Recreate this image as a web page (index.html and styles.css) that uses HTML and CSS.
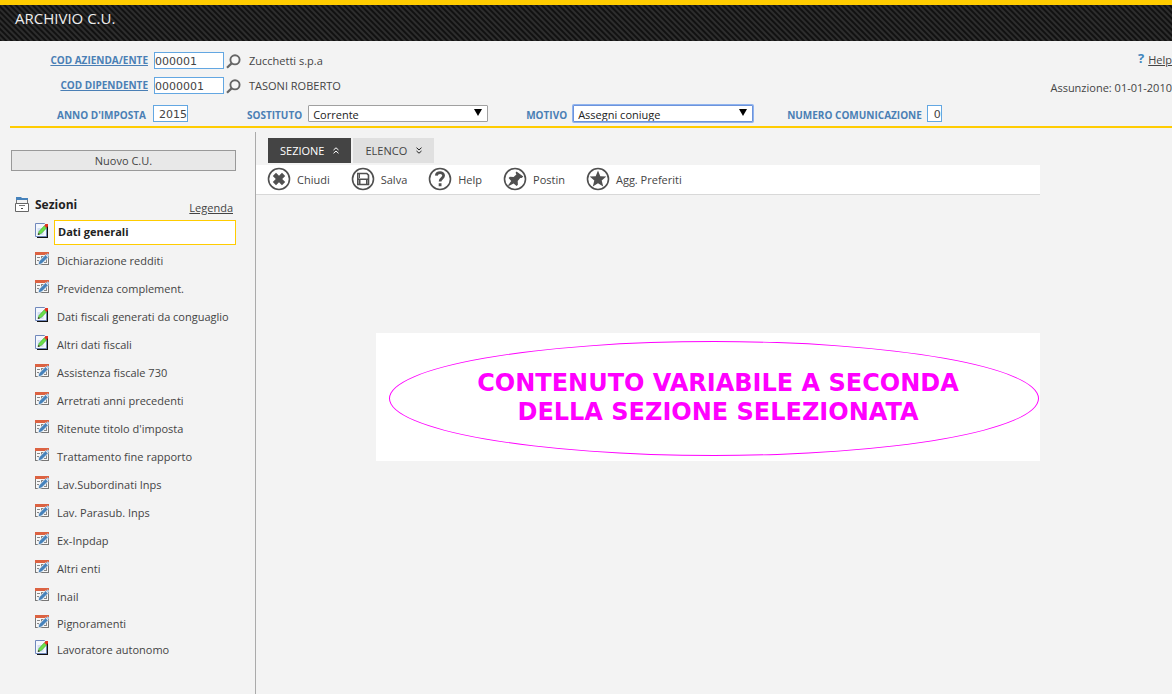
FILE: index.html
```html
<!DOCTYPE html>
<html lang="it">
<head>
<meta charset="utf-8">
<title>Archivio C.U.</title>
<link rel="stylesheet" href="styles.css">
</head>
<body>
<svg class="defs" aria-hidden="true">
  <symbol id="lens" viewBox="0 0 15 15">
    <circle cx="9" cy="5.8" r="4.6" fill="#f8f8f8" stroke="#666" stroke-width="1.9"/>
    <path d="M5.6 9.4 1 13.8" stroke="#666" stroke-width="2.2"/>
  </symbol>
  <symbol id="form" viewBox="0 0 14 14">
    <g shape-rendering="crispEdges">
      <path d="M0 2h14v11H0z" fill="#777"/>
      <path d="M1 3h12v9H1z" fill="#f7f7f7"/>
      <path d="M0 0h14v3H0z" fill="#dc6241"/>
      <path d="M2 5h3v1H2zM2 8h2v1H2zM6 4h3v1H6zM6 4h1v3H6zM11 7h1v4H9v-1h2z" fill="#888"/>
    </g>
    <path d="M3 13 4 9.200 10.500 2.800 13.200 5.400 6.800 11.800z" fill="#4682bb" stroke="#f3f3f3" stroke-width=".8"/>
    <path d="M11.300 2.400 12.500 1.300 14 2.600v1.500L13.300 4.800z" fill="#a8cbe8"/>
  </symbol>
  <symbol id="doc" viewBox="0 0 14 15">
    <path d="M2 2h11v13H2z" fill="#111"/>
    <path d="M.5.5h9l2 2v11H.5z" fill="#f3f7fd" stroke="#7088bc"/>
    <path d="M2.500 5h6v7h-6z" fill="#d5e0f2"/>
    <path d="M3 11.500 4.200 8.300 9.300 2.800 11.600 4.900 6.500 10.300z" fill="#6be04a" stroke="#3fa52e" stroke-width=".6"/>
    <path d="M9.300 2.800 10.600 1h2.400v2l-1.400 1.900z" fill="#e6321e"/>
    <path d="M2.800 12 3.500 10l1.600 1.300z" fill="#413020"/>
  </symbol>
</svg>

<header class="titlebar"><h1>ARCHIVIO C.U.</h1></header>

<form class="filters">
  <div class="row">
    <a class="label lead" href="#azienda">COD AZIENDA/ENTE</a>
    <input class="field code" type="text" value="000001" aria-label="Cod azienda/ente">
    <button class="search" type="button" aria-label="Cerca azienda"><svg><use href="#lens"/></svg></button>
    <span>Zucchetti s.p.a</span>
    <a class="help" href="#help"><b>?</b><u>Help</u></a>
  </div>
  <div class="row">
    <a class="label lead" href="#dipendente">COD DIPENDENTE</a>
    <input class="field code" type="text" value="0000001" aria-label="Cod dipendente">
    <button class="search" type="button" aria-label="Cerca dipendente"><svg><use href="#lens"/></svg></button>
    <span>TASONI ROBERTO</span>
    <span class="hired">Assunzione: 01-01-2010</span>
  </div>
  <div class="row last">
    <label class="label lead" for="anno">ANNO D'IMPOSTA</label>
    <input class="field year" id="anno" type="text" value="2015">
    <label class="label sost" for="sost">SOSTITUTO</label>
    <span class="select"><select id="sost"><option>Corrente</option></select><svg viewBox="0 0 8 7"><path d="M0 0h8L4 7z"/></svg></span>
    <label class="label motivo" for="motivo">MOTIVO</label>
    <span class="select active"><select id="motivo"><option>Assegni coniuge</option></select><svg viewBox="0 0 8 7"><path d="M0 0h8L4 7z"/></svg></span>
    <label class="label numero" for="numero">NUMERO COMUNICAZIONE</label>
    <input class="field num" id="numero" type="text" value="0">
  </div>
</form>

<div class="layout">
  <aside class="sidebar">
    <button class="new" type="button">Nuovo C.U.</button>
    <div class="heading">
      <svg class="cabinet" viewBox="0 0 14 15"><path d="M1 0h5l1 1h6v3H1z" fill="#4682bb"/><path d="M2 3h10v2H2z" fill="#f3f3f3"/><path d="M.5 6.500h13v8H.5z" fill="#fff" stroke="#666"/><path d="M1.500 3v3M12.500 3v3M4 8.500h6" stroke="#777"/><path d="M6 11h2v1H6z" fill="#444"/></svg>
      <h2>Sezioni</h2>
      <a href="#legenda">Legenda</a>
    </div>
    <ul class="sections">
      <li class="current"><svg class="doc"><use href="#doc"/></svg><a href="#s1">Dati generali</a></li>
      <li><svg><use href="#form"/></svg><a href="#s2">Dichiarazione redditi</a></li>
      <li><svg><use href="#form"/></svg><a href="#s3">Previdenza complement.</a></li>
      <li><svg class="doc"><use href="#doc"/></svg><a href="#s4">Dati fiscali generati da conguaglio</a></li>
      <li><svg class="doc"><use href="#doc"/></svg><a href="#s5">Altri dati fiscali</a></li>
      <li><svg><use href="#form"/></svg><a href="#s6">Assistenza fiscale 730</a></li>
      <li><svg><use href="#form"/></svg><a href="#s7">Arretrati anni precedenti</a></li>
      <li><svg><use href="#form"/></svg><a href="#s8">Ritenute titolo d'imposta</a></li>
      <li><svg><use href="#form"/></svg><a href="#s9">Trattamento fine rapporto</a></li>
      <li><svg><use href="#form"/></svg><a href="#s10">Lav.Subordinati Inps</a></li>
      <li><svg><use href="#form"/></svg><a href="#s11">Lav. Parasub. Inps</a></li>
      <li><svg><use href="#form"/></svg><a href="#s12">Ex-Inpdap</a></li>
      <li><svg><use href="#form"/></svg><a href="#s13">Altri enti</a></li>
      <li><svg><use href="#form"/></svg><a href="#s14">Inail</a></li>
      <li class="tight"><svg><use href="#form"/></svg><a href="#s15">Pignoramenti</a></li>
      <li class="tight"><svg class="doc"><use href="#doc"/></svg><a href="#s16">Lavoratore autonomo</a></li>
    </ul>
  </aside>

  <main class="content">
    <nav class="tabs">
      <button class="tab selected" type="button">SEZIONE <svg viewBox="0 0 6 7"><path d="M.5 3 3 .8 5.500 3M.5 6.300 3 4.100l2.500 2.200"/></svg></button>
      <button class="tab" type="button">ELENCO <svg viewBox="0 0 6 7"><path d="M.5.7 3 2.900 5.500.7M.5 4 3 6.200 5.500 4"/></svg></button>
    </nav>
    <div class="toolbar">
      <button type="button"><svg viewBox="0 0 24 24"><circle cx="12" cy="12" r="10.500"/><path class="fill" d="m9 5.800 3 3 3-3 3.200 3.200-3 3 3 3-3.200 3.200-3-3-3 3L5.800 15l3-3-3-3z"/></svg>Chiudi</button>
      <button type="button"><svg viewBox="0 0 24 24"><circle cx="12" cy="12" r="10.500"/><path d="M6.800 6.500h9l1.700 1.700v9.300H6.800z"/><path class="fill" d="M7 11.500h10V13H7zM8 13h1.500v4H8zM15 13h1.500v4H15zM8 7h1v4H8z"/></svg>Salva</button>
      <button type="button"><svg viewBox="0 0 24 24"><circle cx="12" cy="12" r="10.500"/><path class="mark" d="M8.300 8.600c.5-3.800 7.300-3.900 7.300 0 0 2.800-3.500 2.700-3.500 5.800M12.100 16.200v3"/></svg>Help</button>
      <button type="button"><svg viewBox="0 0 24 24"><circle cx="12" cy="12" r="10.500"/><path class="fill" d="m13.500 4.500 6.800 5-1.600 1.600-1.500-.2-2.500 3.200.2 3.600-1.300 1.200-3-2.500L5.800 19l-.8-.6 3.200-4.500L5.600 11l1.300-1.200 3.700.3 2.800-2.700-.8-1.600z"/></svg>Postin</button>
      <button type="button"><svg viewBox="0 0 24 24"><circle cx="12" cy="12" r="10.500"/><path class="fill" d="m12 3.500 2.300 5.700 6 .4-4.600 3.900 1.500 6-5.200-3.300-5.200 3.300 1.500-6-4.600-3.900 6-.4z"/></svg>Agg. Preferiti</button>
    </div>
    <section class="notice">
      <p>CONTENUTO VARIABILE A SECONDA<br>DELLA SEZIONE SELEZIONATA</p>
    </section>
  </main>
</div>
</body>
</html>
```
FILE: styles.css
```css
* { box-sizing: border-box; }
body {
  margin: 0;
  min-height: 100vh;
  display: flex;
  flex-direction: column;
  background: #f3f3f3;
  color: #444;
  font: 11px/16px "Open Sans", sans-serif;
}
h1, h2, p, ul { margin: 0; padding: 0; }
a { color: inherit; }
button, input, select { font: inherit; color: inherit; margin: 0; }
button { padding: 0; border: 0; background: none; }
svg { display: block; flex: none; }
.defs { position: absolute; width: 0; height: 0; }

.titlebar {
  height: 41px;
  padding: 4px 15px;
  border-top: 5px solid #fc0;
  background: repeating-linear-gradient(45deg, #111 0 1px, #2d2d2d 2px 3px, #111 4px);
}
.titlebar h1 { font-size: 15px; line-height: 18px; font-weight: 500; color: #eee; }

.filters {
  margin-left: 10px;
  padding: 11px 0 4px;
  border-bottom: 2px solid #fc0;
}
.row { display: flex; align-items: center; height: 17px; margin-bottom: 8px; white-space: nowrap; }
.row.last { margin: 11px 0 0; }
.label { color: #4a7fb5; font-size: 10px; font-weight: 700; }
.lead { width: 138px; margin-right: 6px; padding-bottom: 2px; text-align: right; }
.last .label { padding: 3px 0 0; }
.last .lead { width: 136px; margin-right: 7px; }
.field {
  height: 17px;
  padding: 1px 0 0;
  border: 1px solid #63a7e2;
  background: #fff;
  font: 11px/14px "DejaVu Sans", sans-serif;
  outline: 0;
}
.code { width: 70px; }
.year { width: 35px; text-align: right; }
.num { width: 15px; text-align: right; }
.search { margin: 2px 8px 0 2px; }
.search svg { width: 15px; height: 15px; }
.help, .hired { margin-left: auto; }
.help { display: flex; align-items: center; gap: 4px; margin-top: -2px; text-decoration: none; }
.help b { color: #4186bd; font-size: 13px; padding-bottom: 4px; }
.hired { padding-top: 5px; }
.sost { margin: 0 6px 0 59px; }
.motivo { margin: 0 6px 0 38px; }
.numero { margin: 0 5px 0 34px; }
.select { position: relative; width: 180px; }
.select select {
  display: block;
  width: 100%;
  height: 17px;
  padding: 1px 4px 0;
  appearance: none;
  border: 1px solid #a0a0a0;
  border-radius: 1px;
  background: #fff;
  color: #222;
  line-height: 15px;
  outline: 0;
}
.select svg { position: absolute; right: 6px; top: 4px; width: 8px; height: 7px; pointer-events: none; }
.select.active select { border-color: #6c93dc; box-shadow: 0 0 0 1px #8fb3ee; }

.layout { flex: 1; display: flex; padding-top: 4px; }
.sidebar { width: 256px; flex: none; padding: 18px 19px 0 11px; border-right: 1px solid #aaa; }
.new { display: block; width: 100%; height: 21px; border: 1px solid #999; background: #e8e8e8; }
.heading { display: flex; align-items: center; height: 49px; padding: 18px 3px 0 4px; }
.cabinet { width: 14px; height: 15px; margin-right: 6px; }
.heading h2 { font-size: 12px; line-height: 16px; color: #222; }
.heading a { margin: 7px 0 0 auto; }
.sections { list-style: none; padding-left: 24px; }
.sections li { display: flex; align-items: center; height: 28px; white-space: nowrap; }
.sections li.tight { height: 26px; }
.sections li.current { height: 25px; margin-bottom: 2px; }
.sections a { text-decoration: none; }
.sections svg { width: 14px; height: 14px; margin: 0 8px 4px 0; }
.sections svg.doc { height: 15px; margin-bottom: 5px; }
.sections .current svg.doc { margin-right: 5px; }
.current a { flex: 1; height: 25px; padding: 3px; border: 1px solid #fc0; background: #fff; color: #222; font-weight: 700; }

.content { flex: 1; padding: 6px 132px 0 0; }
.tabs { display: flex; gap: 2px; padding-left: 12px; }
.tab { display: flex; align-items: center; gap: 9px; height: 25px; padding: 0 12px; background: #e0e0e0; }
.tab.selected { background: #444; color: #fff; }
.tab svg { width: 6px; height: 7px; fill: none; stroke: #222; }
.tab.selected svg { stroke: #fff; }
.toolbar { display: flex; gap: 21px; height: 30px; margin-top: 2px; padding-left: 11px; border-bottom: 1px solid #d8d8d8; background: #fff; }
.toolbar button { display: flex; align-items: center; gap: 6px; height: 29px; }
.toolbar svg { width: 24px; height: 24px; margin-bottom: 2px; fill: none; stroke: #505050; stroke-width: 1.6; }
.toolbar .fill { fill: #505050; stroke: none; }
.toolbar .mark { stroke-width: 2.8; }
.notice { margin: 138px 0 0 120px; padding: 8px 1px 5px 13px; background: #fff; }
.notice p {
  display: flow-root;
  padding: 27px 0 28px 8px;
  border: 1px solid #f0f;
  border-radius: 50%;
  color: #f0f;
  font: 700 24px/29px "DejaVu Sans", sans-serif;
  text-align: center;
  white-space: nowrap;
}
```
